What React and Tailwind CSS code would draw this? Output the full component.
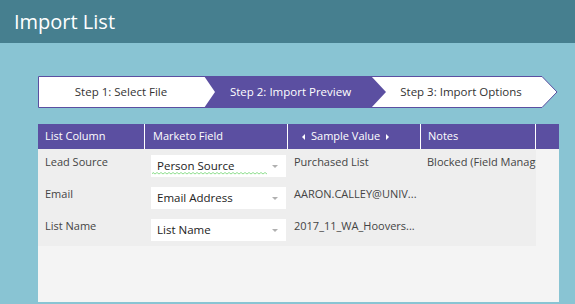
import React from "react";

const rows = [
    { column: "Lead Source", field: "Person Source", sample: "Purchased List", notes: "Blocked (Field Management)", flagged: true },
    { column: "Email", field: "Email Address", sample: "AARON.CALLEY@UNIV...", notes: "" },
    { column: "List Name", field: "List Name", sample: "2017_11_WA_Hoovers...", notes: "" },
];

function StepsBar() {
    return (
        <div className="relative h-[32px] w-[521px]">
            {/* chevron shapes */}
            <svg className="absolute inset-0" width="521" height="32" viewBox="0 0 521 32">
                <path d="M0.5 0.5 H504 L519 16 L504 31.5 H0.5 Z" fill="#ffffff" stroke="#5b4fa1" strokeWidth="1" />
                <path d="M166 0 H333 L348 16 L333 32 H166 L177 16 Z" fill="#5b4fa1" />
            </svg>
            <div className="relative flex h-full text-[11.5px]">
                <div className="flex w-[166px] items-center justify-center text-[#333]">Step 1: Select File</div>
                <div className="flex w-[167px] items-center justify-center pl-[6px] text-white">Step 2: Import Preview</div>
                <div className="flex w-[171px] items-center justify-center pl-[9px] text-[#333]">Step 3: Import Options</div>
            </div>
        </div>
    );
}

function FieldSelect({ value, flagged }) {
    return (
        <div className="relative flex h-[22px] w-[135px] items-center bg-white pl-[6px] pr-[8px] text-[11.5px] text-[#222]">
            <span className="flex-1">{value}</span>
            <span className="h-0 w-0 border-x-[3px] border-t-[3px] border-x-transparent border-t-[#b0b0b0]" />
            {flagged && (
                // spellcheck squiggle
                <svg className="absolute bottom-[2px] left-[1px]" width="115" height="3" viewBox="0 0 115 3">
                    <path
                        d={"M0 2" + Array.from({ length: 58 }, (_, i) => ` L${i * 2 + 1} ${i % 2 ? 2 : 0.5}`).join("")}
                        fill="none"
                        stroke="#72d572"
                        strokeWidth="0.8"
                    />
                </svg>
            )}
        </div>
    );
}

export default function App() {
    return (
        <div className="h-[304px] w-[575px] overflow-hidden bg-[#89c4d3] font-['Open_Sans',sans-serif]">
            {/* Header */}
            <div className="flex h-[43px] items-center bg-[#467f8f] pl-[14px]">
                <h1 className="text-[20px] text-white">Import List</h1>
            </div>

            <div className="pl-[38px] pt-[33px]">
                <StepsBar />

                {/* Preview table */}
                <div className="mt-[16px] flex h-[178px] w-[521px] flex-col bg-[#f4f4f4]">
                    <div className="flex h-[25px] shrink-0 bg-[#5b4fa1] text-[11px] font-medium text-white">
                        <div className="flex w-[107px] items-center border-r border-white pl-[7px]">List Column</div>
                        <div className="flex w-[143px] items-center border-r border-white pl-[8px]">Marketo Field</div>
                        <div className="flex w-[133px] items-center border-r border-white pl-[14px]">
                            <span className="mr-[6px] h-0 w-0 border-y-[3px] border-r-[3px] border-y-transparent border-r-white" />
                            Sample Value
                            <span className="ml-[6px] h-0 w-0 border-y-[3px] border-l-[3px] border-y-transparent border-l-white" />
                        </div>
                        <div className="flex w-[115px] items-center border-r border-white pl-[7px]">Notes</div>
                        <div className="flex-1" />
                    </div>

                    <div className="w-[498px] bg-[#eeeeee] pb-[1px]">
                        {rows.map((row) => (
                            <div key={row.column} className="flex h-[32px] text-[11px] text-[#444]">
                                <div className="w-[107px] pl-[7px] pt-[5px]">{row.column}</div>
                                <div className="w-[143px] pl-[6px] pt-[6px]">
                                    <FieldSelect value={row.field} flagged={row.flagged} />
                                </div>
                                <div className="w-[133px] whitespace-nowrap pl-[6px] pt-[5px]">{row.sample}</div>
                                <div className="w-[115px] overflow-hidden whitespace-nowrap pl-[6px] pt-[5px]">{row.notes}</div>
                            </div>
                        ))}
                    </div>
                </div>
            </div>
        </div>
    );
}
